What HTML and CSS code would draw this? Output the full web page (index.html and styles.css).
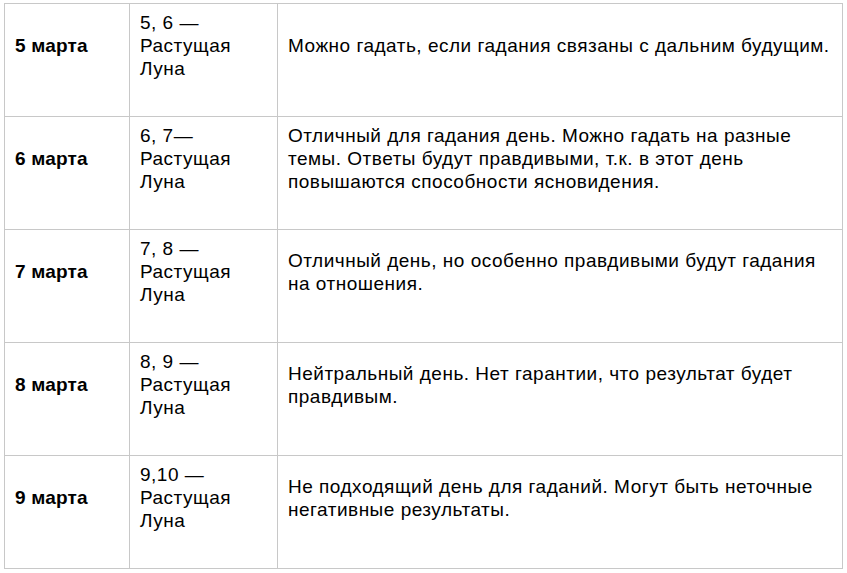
FILE: index.html
```html
<!DOCTYPE html>
<html lang="ru">
<head>
<meta charset="utf-8">
<title>Гадания в марте</title>
<link rel="stylesheet" href="styles.css">
</head>
<body>
<table class="moon-table">
  <colgroup>
    <col class="col-date">
    <col class="col-moon">
    <col class="col-text">
  </colgroup>
  <tbody>
    <tr>
      <td class="date"><p>5 марта</p></td>
      <td><p>5, 6 —<br>Растущая<br>Луна</p></td>
      <td><p>Можно гадать, если гадания связаны с дальним будущим.</p></td>
    </tr>
    <tr>
      <td class="date"><p>6 марта</p></td>
      <td><p>6, 7—<br>Растущая<br>Луна</p></td>
      <td><p>Отличный для гадания день. Можно гадать на разные темы. Ответы будут правдивыми, т.к. в этот день повышаются способности ясновидения.</p></td>
    </tr>
    <tr>
      <td class="date"><p>7 марта</p></td>
      <td><p>7, 8 —<br>Растущая<br>Луна</p></td>
      <td><p>Отличный день, но особенно правдивыми будут гадания на отношения.</p></td>
    </tr>
    <tr>
      <td class="date"><p>8 марта</p></td>
      <td><p>8, 9 —<br>Растущая<br>Луна</p></td>
      <td><p>Нейтральный день. Нет гарантии, что результат будет правдивым.</p></td>
    </tr>
    <tr>
      <td class="date"><p>9 марта</p></td>
      <td><p>9,10 —<br>Растущая<br>Луна</p></td>
      <td><p>Не подходящий день для гаданий. Могут быть неточные негативные результаты.</p></td>
    </tr>
  </tbody>
</table>
</body>
</html>
```

FILE: styles.css
```css
html, body {
  background: #ffffff;
}
body {
  margin: 3px 0 0 4px;
  font-family: "Liberation Sans", Arial, sans-serif;
  font-size: 19px;
  line-height: 23px;
  letter-spacing: 0.5px;
  color: #000000;
}
.moon-table {
  border-collapse: collapse;
  width: 839px;
  table-layout: fixed;
}
.col-date { width: 125px; }
.col-moon { width: 148px; }
.moon-table td {
  border: 1px solid #c8c8c8;
  padding: 7px 10px;
  vertical-align: middle;
  height: 98px;
}
.moon-table td p {
  margin: 0 0 29px 0;
}
.moon-table td.date {
  font-weight: bold;
  letter-spacing: 0.2px;
}
```
